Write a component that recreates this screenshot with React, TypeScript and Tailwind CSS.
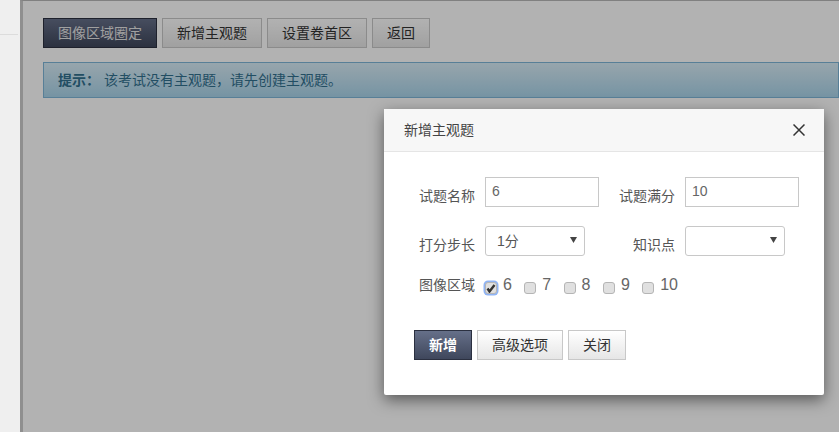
import React from 'react';

const font = "font-['Liberation_Sans','Noto_Sans_CJK_SC',sans-serif]";
const plainBtn = 'h-[30px] border border-[#c8c8c8] bg-gradient-to-b from-white to-[#e6e6e6] text-[14px] text-[#333] flex items-center justify-center';
const darkBtn = 'h-[30px] border border-[#2b3040] bg-gradient-to-b from-[#667089] to-[#3f475c] text-[14px] flex items-center justify-center';

const Field = ({ value }: { value: string }) => (
  <input
    readOnly
    value={value}
    className="h-[30px] w-[114px] border border-[#c8c8c8] bg-white px-[6px] pb-[2px] text-[14px] text-[#666] outline-none"
  />
);

const Select = ({ value }: { value?: string }) => (
  <div className="flex h-[30px] w-[100px] items-center justify-between rounded-[3px] border border-[#c8c8c8] bg-white pl-[11px] pr-[7px] text-[14px] text-[#555]">
    <span>{value}</span>
    <svg width="7" height="6" viewBox="0 0 7 6" className="mb-[3px]">
      <path d="M0 0h7L3.5 6z" fill="#444" />
    </svg>
  </div>
);

const Check = ({ label, checked }: { label: string; checked?: boolean }) => (
  <div className="flex w-[39.3px] items-start">
    <span
      className={
        'mt-[7px] flex h-[12px] w-[12px] items-center justify-center rounded-[3px] border border-[#b5b5b5] bg-[#e0e0e0] ' +
        (checked ? 'shadow-[0_0_0_1.5px_#8fb4f5]' : '')
      }
    >
      {checked && (
        <svg width="10" height="9" viewBox="0 0 10 9">
          <path d="M1.5 4.5l2 3L8.5 1" fill="none" stroke="#333" strokeWidth="2.4" />
        </svg>
      )}
    </span>
    <span className="ml-[6px] text-[16px] leading-[20px] text-[#666]">{label}</span>
  </div>
);

export default function App() {
  return (
    <div className={'relative flex h-[432px] w-[839px] overflow-hidden bg-[#efefef] ' + font}>
      {/* left strip */}
      <div className="w-[20px] shrink-0 pt-[34px]">
        <div className="h-px w-[18px] bg-[#dcdcdc]" />
      </div>

      {/* main area */}
      <div className="relative flex-1 border-l-[3px] border-t border-l-[#8f8f8f] border-t-[#808080] bg-white">
        <div className="pl-[20px] pt-[17px]">
          <div className="flex gap-[5px]">
            <div className={darkBtn + ' w-[114px] text-[#e6e6e6]'}>图像区域圈定</div>
            <div className={plainBtn + ' w-[100px]'}>新增主观题</div>
            <div className={plainBtn + ' w-[100px]'}>设置卷首区</div>
            <div className={plainBtn + ' w-[58px]'}>返回</div>
          </div>
          <div className="mt-[14px] flex h-[36px] items-center border border-[#7fb6d8] bg-gradient-to-b from-[#d9edf7] to-[#a9d4ea] pl-[14px] text-[14px] text-[#31708f]">
            <span className="font-bold">提示：</span>
            <span className="ml-[4px]">该考试没有主观题，请先创建主观题。</span>
          </div>
        </div>
        <div className="absolute inset-0 bg-black/30" />
      </div>

      {/* dialog */}
      <div className="absolute left-[384px] top-[109px] h-[286px] w-[440px] rounded-[2px] bg-white shadow-[0_5px_15px_rgba(0,0,0,0.5)]">
        <div className="flex h-[43px] items-center justify-between border-b border-[#e5e5e5] bg-[#f7f7f7] pl-[20px] pr-[19px]">
          <span className="text-[14px] text-[#444]">新增主观题</span>
          <svg width="12" height="12" viewBox="0 0 12 12">
            <path d="M0.5 0.5l11 11M11.5 0.5l-11 11" stroke="#333" strokeWidth="1.5" />
          </svg>
        </div>
        <div className="pt-[25px]">
          <div className="flex items-start">
            <label className="w-[91px] pt-[9px] text-right text-[14px] text-[#555]">试题名称</label>
            <div className="ml-[10px]"><Field value="6" /></div>
            <label className="w-[76px] pt-[9px] text-right text-[14px] text-[#555]">试题满分</label>
            <div className="ml-[10px]"><Field value="10" /></div>
          </div>
          <div className="mt-[19px] flex items-start">
            <label className="w-[91px] pt-[9px] text-right text-[14px] text-[#555]">打分步长</label>
            <div className="ml-[10px] w-[114px]"><Select value="1分" /></div>
            <label className="w-[76px] pt-[9px] text-right text-[14px] text-[#555]">知识点</label>
            <div className="ml-[10px]"><Select /></div>
          </div>
          <div className="mt-[19px] flex items-start">
            <label className="w-[91px] text-right text-[14px] text-[#555]">图像区域</label>
            <div className="ml-[10px] flex">
              <Check label="6" checked />
              <Check label="7" />
              <Check label="8" />
              <Check label="9" />
              <Check label="10" />
            </div>
          </div>
          <div className="ml-[30px] mt-[34px] flex gap-[5px]">
            <div className={darkBtn + ' w-[58px] font-bold text-white'}>新增</div>
            <div className={plainBtn + ' w-[86px]'}>高级选项</div>
            <div className={plainBtn + ' w-[58px]'}>关闭</div>
          </div>
        </div>
      </div>
    </div>
  );
}
